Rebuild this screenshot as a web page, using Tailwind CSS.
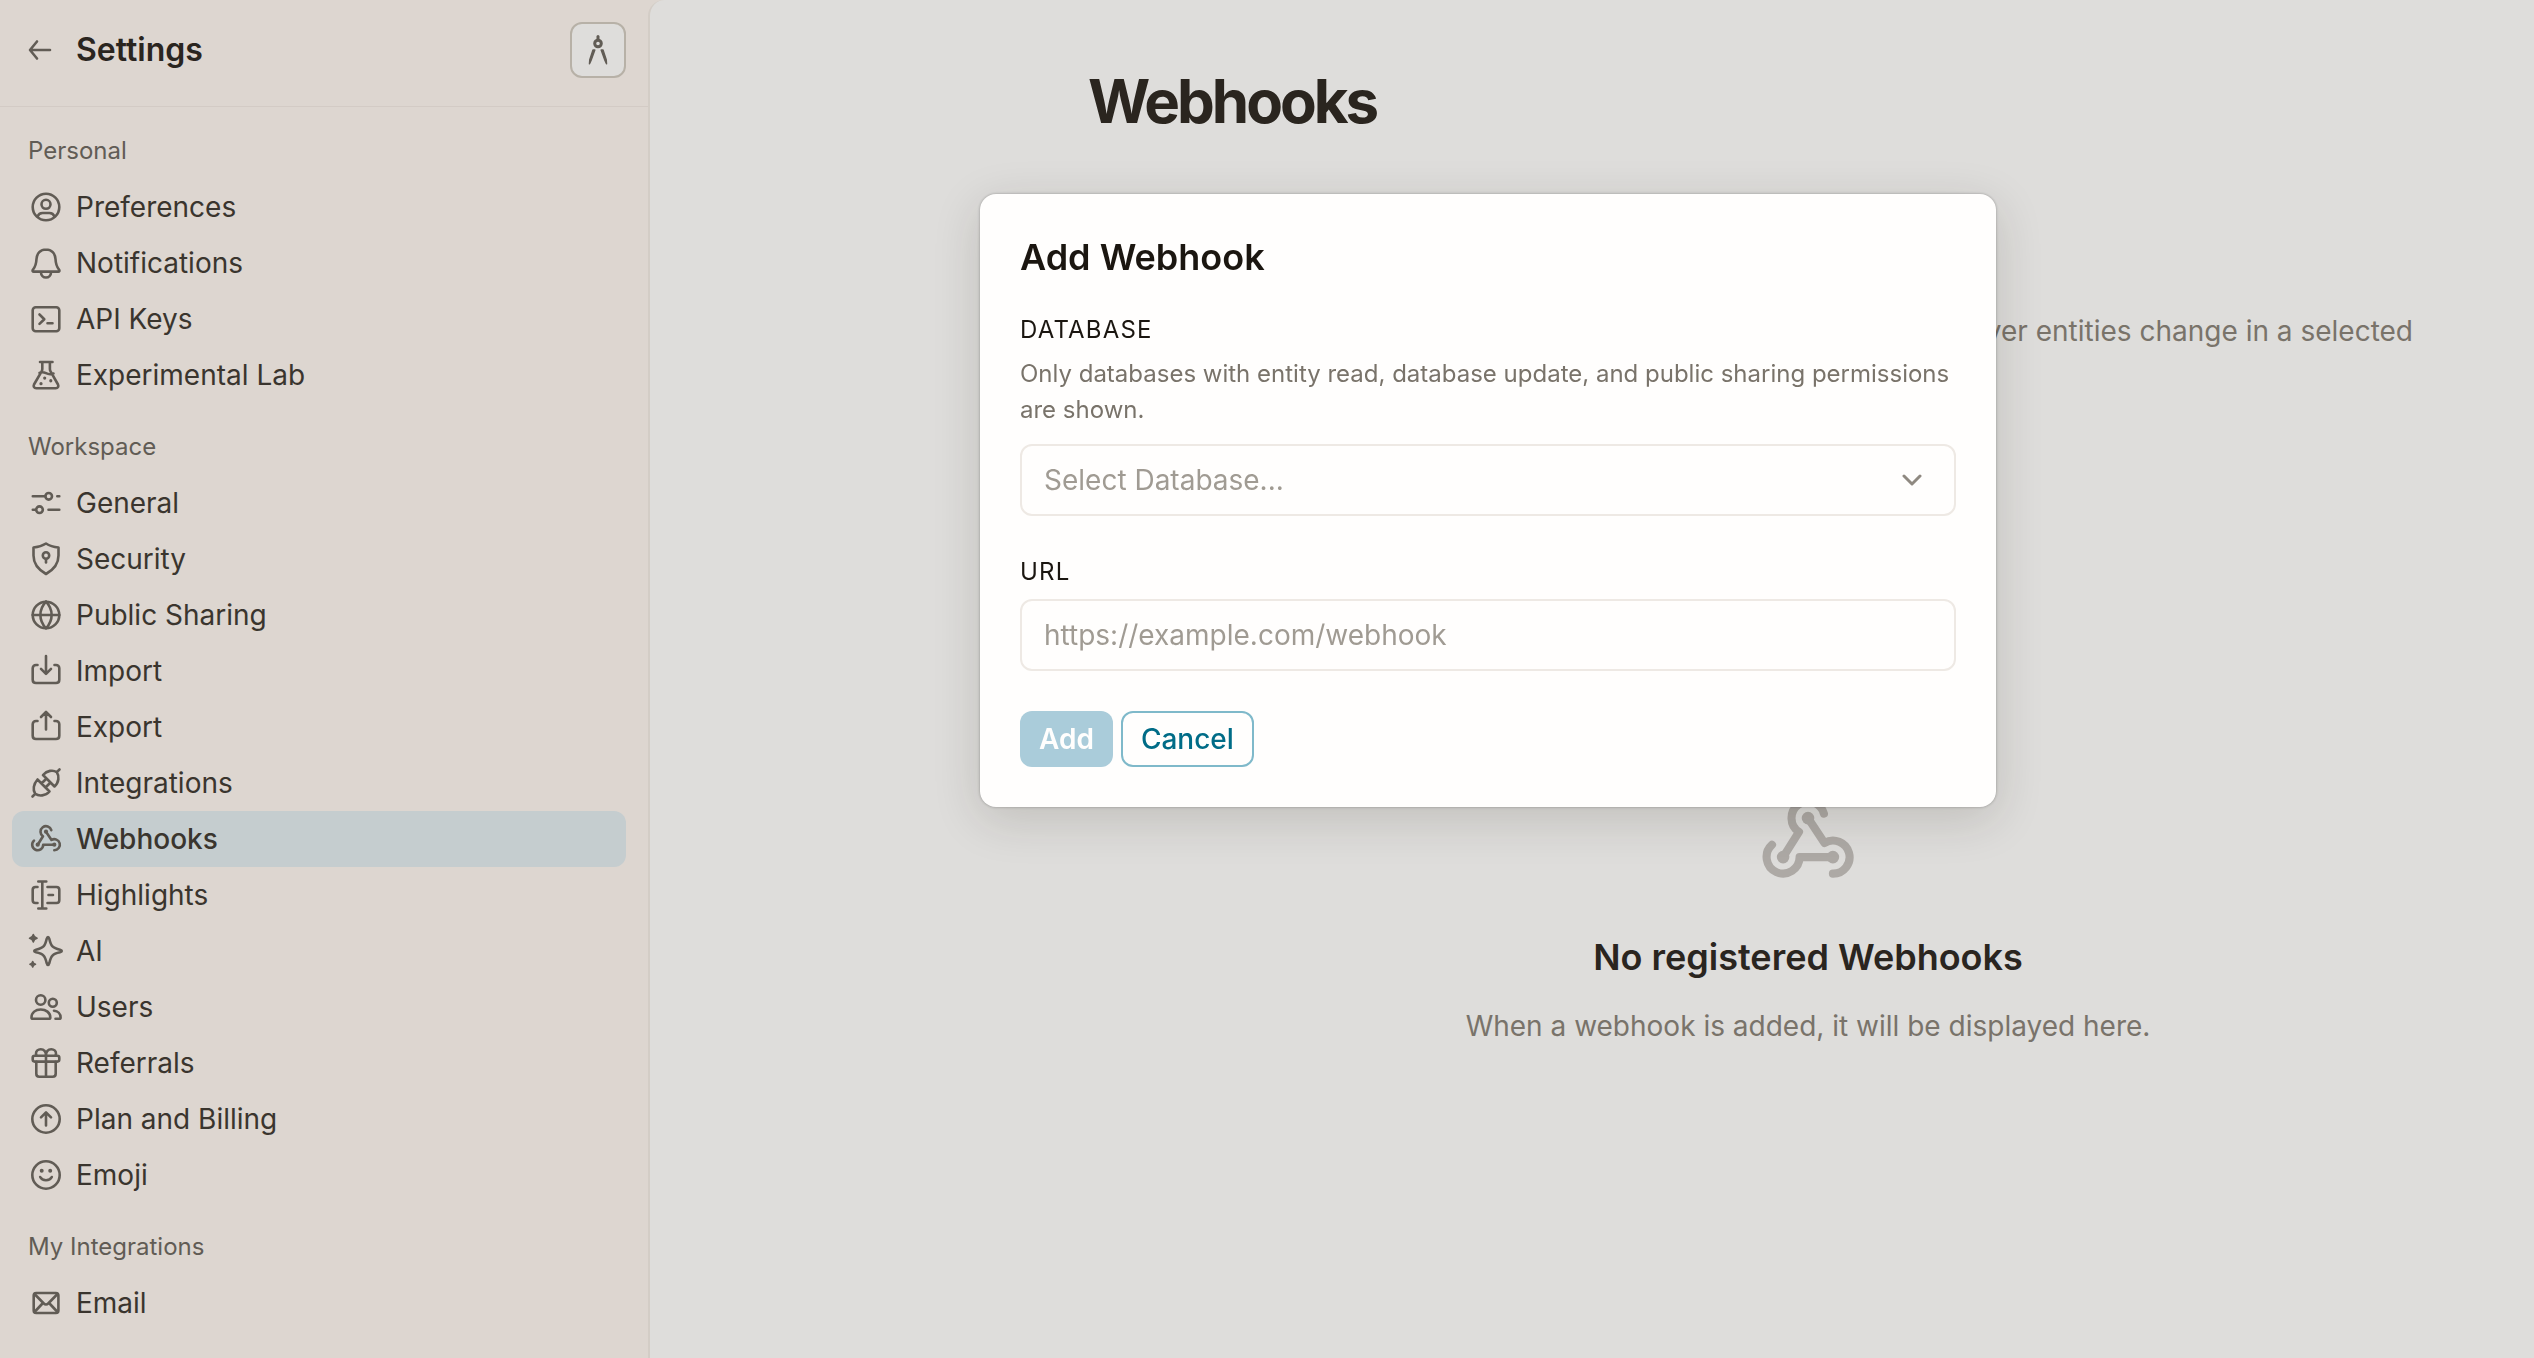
<!DOCTYPE html>
<html lang="en">
<head>
    <meta charset="UTF-8">
    <meta name="viewport" content="width=device-width, initial-scale=1.0">
    <title>Settings - Webhooks</title>
    <script src="https://cdn.jsdelivr.net/npm/@tailwindcss/browser@4"></script>
</head>
<body class="bg-[#ddd6d0] font-['Inter',sans-serif] text-[28px] text-[#2a251f]">
    <div class="flex min-h-screen">
        <!-- Sidebar -->
        <aside class="w-[648px] shrink-0">
            <header class="flex h-[107px] items-start border-b border-[#d3cbc5] pt-[22px] pr-[22px] pl-[20px]">
                <a href="#" aria-label="Back" class="flex h-14 w-10 items-center justify-center text-[#615c55]">
                    <svg class="size-10" viewBox="0 0 40 40" fill="none" stroke="currentColor" stroke-width="2.6" stroke-linecap="round" stroke-linejoin="round"><path d="M30 20H10.5M17 11.5 10 20l7 8.500"/></svg>
                </a>
                <h1 class="ml-4 flex-1 text-[32px] leading-[56px] font-semibold">Settings</h1>
                <button type="button" aria-label="Customize" class="flex size-14 items-center justify-center rounded-xl border-2 border-[#b7b1a7] bg-[#dedddb] text-[#615c55]">
                    <svg class="size-10" viewBox="0 0 40 40" fill="none" stroke="currentColor" stroke-width="3" stroke-linecap="round" stroke-linejoin="round"><path d="M20 6.500v3"/><circle cx="20" cy="13.500" r="3.300"/><path d="M16.800 20 13 30.500l-1.500 3.200.3-4L15 20zM23.200 20 27 30.500l1.500 3.200-.3-4L25 20z" stroke-width="1.500" fill="currentColor"/></svg>
                </button>
            </header>
            <nav id="menu"></nav>
        </aside>

        <!-- Page -->
        <main class="min-w-0 flex-1 rounded-tl-2xl border-l-2 border-[#d3cdc6] bg-[#dedddb] pt-16 pr-[6px] pl-[438px]">
            <h2 class="text-[60px] leading-[74px] font-bold tracking-tighter">Webhooks</h2>
            <p class="mt-[172px] pr-[115px] text-right leading-[42px] text-[#79736a]">Get notified whenever entities change in a selected</p>
            <div class="mt-[428px] flex flex-col items-center text-center">
                <svg id="emptyIcon" class="size-[120px] text-[#ada9a5]" viewBox="0 0 40 40" fill="none" stroke="currentColor" stroke-width="2.7" stroke-linecap="round" stroke-linejoin="round"></svg>
                <h3 class="mt-[35px] text-[36px] leading-[44px] font-semibold">No registered Webhooks</h3>
                <p class="mt-[26px] leading-[42px] text-[#79736a]">When a webhook is added, it will be displayed here.</p>
            </div>
        </main>
    </div>

    <!-- Add webhook dialog -->
    <div class="fixed inset-0 flex items-start justify-center pt-[194px] pl-[442px]">
        <form id="webhookForm" role="dialog" aria-labelledby="dialogTitle" class="w-[1016px] rounded-2xl bg-[#fffefd] p-10 shadow-[0_0_3px_rgba(0,0,0,0.3),0_12px_48px_rgba(40,30,20,0.16)]">
            <h2 id="dialogTitle" class="text-[36px] leading-[46px] font-semibold text-[#1b1610]">Add Webhook</h2>

            <label for="database" class="mt-8 block text-[24px] leading-9 tracking-wider text-[#1b1610]">DATABASE</label>
            <p class="mt-2 text-[24px] leading-9 text-[#79736a]">Only databases with entity read, database update, and public sharing permissions are shown.</p>
            <div class="relative mt-4">
                <select id="database" class="h-[72px] w-full appearance-none rounded-xl border-2 border-[#eee9e4] px-[22px] text-[#a09b93]">
                    <option>Select Database...</option>
                </select>
                <svg class="pointer-events-none absolute top-4 right-6 size-10 text-[#8f8981]" viewBox="0 0 40 40" fill="none" stroke="currentColor" stroke-width="3" stroke-linecap="round" stroke-linejoin="round"><path d="m12 16 8 8 8-8"/></svg>
            </div>

            <label for="url" class="mt-[38px] block text-[24px] leading-9 tracking-wider text-[#1b1610]">URL</label>
            <input id="url" type="url" placeholder="https://example.com/webhook" class="mt-[9px] block h-[72px] w-full rounded-xl border-2 border-[#eee9e4] px-[22px] placeholder:text-[#a09b93]">

            <div class="mt-10 flex gap-2">
                <button type="submit" disabled class="h-14 rounded-xl bg-[#aaccda] px-[19px] font-semibold text-[#fffefd]">Add</button>
                <button type="button" class="h-14 rounded-xl border-2 border-[#7fb9ca] px-[18px] font-medium text-[#006c87]">Cancel</button>
            </div>
        </form>
    </div>

    <script>
        const icons = {
            user: '<circle cx="20" cy="20" r="13.3"/><circle cx="20" cy="17.3" r="4.5"/><path d="M11.5 29.5c1-2.5 2.5-3.500 5-3.500h7c2.500 0 4 1 5 3.500"/>',
            bell: '<path d="M20 6.500c-5.500 0-9.300 4-9.500 9.500-.2 5-1 7.500-3.600 10.800-.7 1-.2 1.800.8 1.800h24.600c1 0 1.500-.8.8-1.800-2.600-3.300-3.400-5.800-3.600-10.800-.2-5.500-4-9.500-9.500-9.500zM15 29v.5a5 5 0 0 0 10 0V29"/>',
            terminal: '<rect x="6.7" y="8.3" width="26.6" height="24" rx="3"/><path d="m13.5 15.5 4.800 4.700-4.800 4.700M21.500 24.300h5"/>',
            flask: '<path d="M14 7h12.500M16.300 7v7c0 1-.3 1.800-.8 2.600L8 29.500c-1 2 .2 3.700 2.200 3.700h19.600c2 0 3.200-1.700 2.200-3.700l-7.300-12.900c-.5-.8-.8-1.600-.8-2.600V7M13.500 18c2.500-1.300 4-1 6.500.2s5 1.300 7.500.3"/><path d="M18.700 23v.1M24.800 25.700v.1M15 28.600v.1" stroke-width="3.2"/>',
            sliders: '<path d="M6.800 13.300h12.400M31.300 13.300h2M6.800 26.700h3M22.500 26.700h10.800"/><circle cx="22.7" cy="13.3" r="3.3"/><circle cx="13.5" cy="26.7" r="3.3"/>',
            shield: '<path d="M20 4.500c3.500 2.300 7.500 3.500 12.500 4v8c0 8-4.500 14-12.500 18.500C12 30.500 7.500 24.500 7.500 16.500v-8c5-.5 9-1.700 12.500-4z"/><circle cx="20" cy="16.5" r="3.2"/><path d="M20 20v3.500"/>',
            globe: '<circle cx="20" cy="20" r="13.3"/><path d="M6.700 20h26.600M20 6.700c-7.500 8-7.500 18.600 0 26.600M20 6.700c7.500 8 7.500 18.600 0 26.600"/>',
            import: '<path d="M11.500 14H10c-2 0-3.300 1.200-3.300 3.300v11.400c0 2 1.300 3.300 3.300 3.300h20c2 0 3.300-1.300 3.300-3.300V17.300c0-2-1.300-3.300-3.300-3.300h-1.500M20 5v17.500M15 17.800l5 5 5-5"/>',
            export: '<path d="M11.500 14H10c-2 0-3.300 1.200-3.300 3.300v11.400c0 2 1.300 3.300 3.300 3.300h20c2 0 3.300-1.300 3.300-3.300V17.300c0-2-1.300-3.300-3.300-3.300h-1.500M20 22.500V5M15 10l5-5 5 5"/>',
            plug: '<path d="M33.500 6.500 30.800 9.200M6.500 33.500l2.700-2.700M17 12l11.500 11.500c4.500-4 5-10.500 2.300-14.300C27 6.500 21 7.500 17 12zM11.500 16.500 23.500 28.500c-4 4.500-10.500 5-14.300 2.300C6.500 27 7.500 21 11.500 16.500zM15.500 20.500l4-4M19.500 24.500l4-4"/>',
            webhook: '<path d="M25.300 11.200A5.500 5.500 0 1 0 17 17.300L11.700 25.700M20 12.700 25.500 21A5.500 5.500 0 1 1 28.300 31.200M8 21.600A5.500 5.500 0 1 0 17.200 25.700H28.300"/><g fill="currentColor" stroke="none"><circle cx="20" cy="12.7" r="2.1"/><circle cx="11.7" cy="25.7" r="2.1"/><circle cx="28.3" cy="25.7" r="2.1"/></g>',
            highlight: '<path d="M16.300 6.500v27M12.300 6.500h8M12.300 33.500h8M11.500 12H9.500c-1.800 0-2.800 1-2.800 2.800v10.400c0 1.800 1 2.800 2.800 2.800h2M21.500 12h9c1.800 0 2.800 1 2.800 2.800v10.400c0 1.800-1 2.800-2.800 2.800h-9M22.500 20h4.500"/>',
            sparkle: '<path d="M22 6c.8 0 1 .7 1.300 1.800 1.700 7.500 3.200 9.300 10.700 10.900 1.100.3 1.800.5 1.800 1.300s-.7 1-1.800 1.300c-7.500 1.600-9 3.400-10.700 10.900-.3 1.100-.5 1.800-1.300 1.800s-1-.7-1.300-1.800c-1.700-7.500-3.200-9.300-10.700-10.900-1.100-.3-1.800-.5-1.800-1.300s.7-1 1.800-1.300c7.500-1.600 9-3.400 10.700-10.900C21 6.700 21.200 6 22 6z"/><path d="M7.300 3.500c.6 2.600 1.200 3.200 3.800 3.800-2.600.6-3.200 1.200-3.800 3.800-.6-2.600-1.200-3.200-3.800-3.800 2.600-.6 3.200-1.200 3.800-3.800zM6.700 30.500c.4 2 .8 2.400 2.800 2.800-2 .4-2.400.8-2.800 2.800-.4-2-.8-2.400-2.800-2.800 2-.4 2.400-.8 2.800-2.800z" fill="currentColor" stroke-width="1.5"/>',
            users: '<circle cx="14.7" cy="13" r="4.7"/><circle cx="26.8" cy="15.7" r="4"/><path d="M5.500 30.500c0-5 4-8 9.200-8s9.600 3 9.600 8c0 .8-.5 1.300-1.300 1.300H6.800c-.8 0-1.300-.5-1.300-1.300zM28 23.700c4 .3 6.600 3 6.600 6.800 0 .8-.5 1.300-1.300 1.300h-3.800"/>',
            gift: '<rect x="6.7" y="12.8" width="26.6" height="5.8" rx="2"/><path d="M10.300 18.800v12c0 1.800 1.200 3 3 3h13.400c1.800 0 3-1.200 3-3v-12M20 13v20.500M20 12.500c0-4-2-6.300-5.300-6.300-2.700 0-4.700 1.800-4.700 4.300 0 .8.2 1.500.6 2M20 12.500c0-4 2-6.300 5.300-6.300 2.700 0 4.700 1.800 4.700 4.300 0 .8-.2 1.500-.6 2"/>',
            arrowUp: '<circle cx="20" cy="20" r="13.7"/><path d="M20 26.500v-13M15 18.300l5-5 5 5"/>',
            smile: '<circle cx="20" cy="20" r="13.7"/><path d="M14.200 22c1 2 3.300 3.200 5.800 3.200s4.800-1.200 5.800-3.200"/><path d="M15.700 15.700v.1M24.200 15.700v.1" stroke-width="4"/>',
            mail: '<rect x="7.7" y="10" width="24.7" height="20" rx="2.5"/><path d="m8.500 11 9.300 9.500c1.300 1.300 3.100 1.300 4.400 0L31.500 11M8.500 29l7.500-8M31.500 29 24 21"/>'
        };

        const sections = [
            { title: "Personal", items: [["user", "Preferences"], ["bell", "Notifications"], ["terminal", "API Keys"], ["flask", "Experimental Lab"]] },
            { title: "Workspace", items: [["sliders", "General"], ["shield", "Security"], ["globe", "Public Sharing"], ["import", "Import"], ["export", "Export"], ["plug", "Integrations"], ["webhook", "Webhooks"], ["highlight", "Highlights"], ["sparkle", "AI"], ["users", "Users"], ["gift", "Referrals"], ["arrowUp", "Plan and Billing"], ["smile", "Emoji"]] },
            { title: "My Integrations", items: [["mail", "Email"]] }
        ];

        const menu = document.getElementById("menu");
        sections.forEach(section => {
            const block = document.createElement("section");
            block.innerHTML = `
                <h2 class="h-[72px] pt-7 pl-7 text-[24px] leading-8 text-[#615c55]">${section.title}</h2>
                <ul class="pr-[22px] pl-3">
                    ${section.items.map(([icon, label]) => `
                        <li>
                            <a href="#" class="flex h-14 items-center gap-[10px] rounded-xl px-[14px] text-[#3a352e] ${label === "Webhooks" ? "bg-[#c5cdcf] font-medium" : ""}">
                                <svg class="size-10 shrink-0 text-[#615c55]" viewBox="0 0 40 40" fill="none" stroke="currentColor" stroke-width="2.6" stroke-linecap="round" stroke-linejoin="round">${icons[icon]}</svg>
                                ${label}
                            </a>
                        </li>`).join("")}
                </ul>
            `;
            menu.appendChild(block);
        });

        document.getElementById("emptyIcon").innerHTML = icons.webhook;
    </script>
</body>
</html>
